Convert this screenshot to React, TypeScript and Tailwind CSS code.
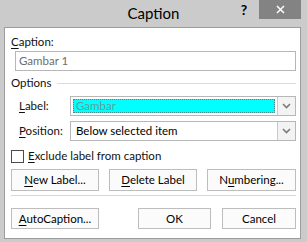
import React from 'react';

const ui = { fontFamily: 'Lato, "Liberation Sans", Arial, sans-serif' };

function Key({ children }: { children: React.ReactNode }) {
  return <span className="underline underline-offset-2 decoration-1">{children}</span>;
}

function Button({ w, children }: { w: string; children: React.ReactNode }) {
  return (
    <div
      className={`${w} h-full flex items-center justify-center bg-[#fbfbfb] border border-[#bdbdbd] text-[11.5px] text-black`}
    >
      {children}
    </div>
  );
}

function Chevron() {
  return (
    <svg width="9" height="6" viewBox="0 0 9 6">
      <path d="M1 1 L4.5 4.5 L8 1" fill="none" stroke="#7b7b7b" strokeWidth="1.6" />
    </svg>
  );
}

function Combo({ selected, text }: { selected?: boolean; text: string }) {
  return (
    <div className="flex-1 h-full flex border border-[#b7b7b7] bg-white">
      <div className="flex-1 p-[2px]">
        {selected ? (
          <div className="h-full bg-[#00ffff] border border-dotted border-[#3b8f8f] flex items-center pl-[2px] text-[11.5px] text-[#6f9a9a]">
            {text}
          </div>
        ) : (
          <div className="h-full flex items-center pl-[3px] text-[11.5px] text-black">{text}</div>
        )}
      </div>
      <div className="w-[18px] flex items-center justify-center border-l border-[#c9c9c9] bg-[#f3f3f3]">
        <Chevron />
      </div>
    </div>
  );
}

export default function App() {
  return (
    <div className="w-[307px] h-[242px] bg-[#cbcbcb] flex flex-col" style={ui}>
      {/* Title bar */}
      <div className="h-[27px] grid grid-cols-[1fr_auto_1fr]">
        <div />
        <div className="flex items-center text-[15px] text-black pb-[1px]">Caption</div>
        <div className="flex justify-end items-start pr-[6px]">
          <div className="w-[30px] h-[19px] flex items-center justify-center text-[14px] font-bold text-black">?</div>
          <div className="w-[42px] h-[19px] bg-[#838383] flex items-center justify-center">
            <svg width="9" height="9" viewBox="0 0 9 9">
              <path d="M1 1 L8 8 M8 1 L1 8" stroke="#ffffff" strokeWidth="1.5" />
            </svg>
          </div>
        </div>
      </div>

      {/* Client area */}
      <div className="ml-[4px] w-[297px] h-[212px] border border-[#9c9c9c] bg-white flex flex-col pl-[6px] pr-[4px] pt-[6px] text-[#111]">
        <div className="h-[16px] leading-[16px] text-[11.5px]">
          <Key>C</Key>aption:
        </div>
        <div className="mt-[1px] ml-[4px] h-[20px] border border-[#b7b7b7] flex items-center pl-[3px] text-[11.5px] text-[#6e6e6e]">
          Gambar 1
        </div>

        <div className="mt-[4px] h-[16px] flex items-center text-[11.5px]">
          <span>Options</span>
          <div className="flex-1 ml-[6px] h-px bg-[#dcdcdc]" />
        </div>

        <div className="mt-[5px] h-[20px] flex items-center">
          <div className="w-[59px] pl-[8px] text-[11.5px]">
            <Key>L</Key>abel:
          </div>
          <Combo selected text="Gambar" />
        </div>

        <div className="mt-[5px] h-[20px] flex items-center">
          <div className="w-[59px] pl-[8px] text-[11.5px]">
            <Key>P</Key>osition:
          </div>
          <Combo text="Below selected item" />
        </div>

        <div className="mt-[8px] h-[14px] flex items-center gap-[4px]">
          <div className="w-[13px] h-[13px] border border-[#4a4a4a] bg-white" />
          <span className="text-[11.5px]">
            <Key>E</Key>xclude label from caption
          </span>
        </div>

        <div className="mt-[6px] h-[22px] flex justify-between">
          <Button w="w-[88px]">
            <span><Key>N</Key>ew Label...</span>
          </Button>
          <Button w="w-[88px]">
            <span><Key>D</Key>elete Label</span>
          </Button>
          <Button w="w-[89px]">
            <span>N<Key>u</Key>mbering...</span>
          </Button>
        </div>

        <div className="mt-[4px] h-px bg-[#d6d6d6]" />

        <div className="mt-[12px] h-[21px] flex">
          <Button w="w-[88px]">
            <span><Key>A</Key>utoCaption...</span>
          </Button>
          <div className="flex-1" />
          <Button w="w-[73px]">OK</Button>
          <div className="w-[11px]" />
          <Button w="w-[74px]">Cancel</Button>
        </div>
      </div>
    </div>
  );
}
